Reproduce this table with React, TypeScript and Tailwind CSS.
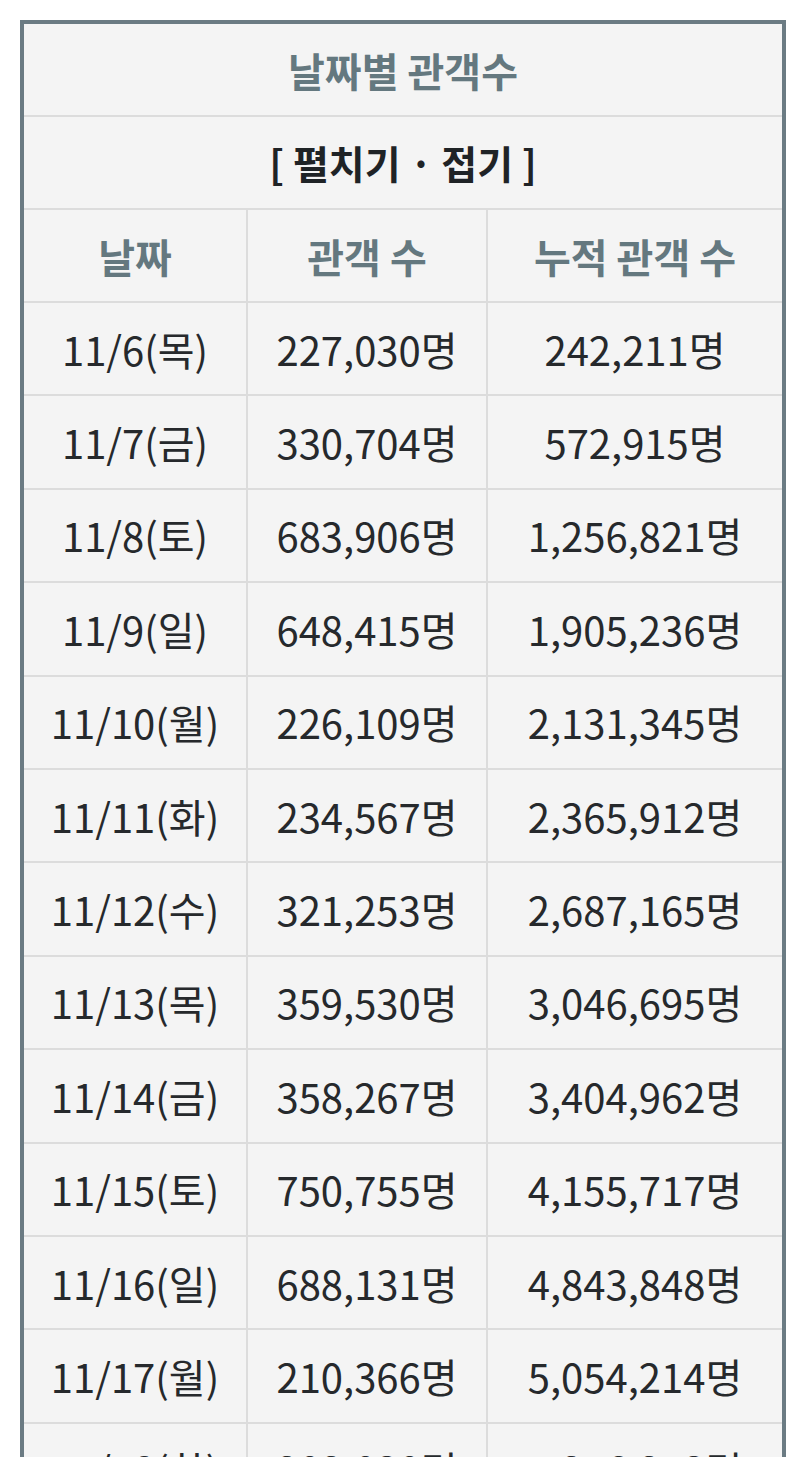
import React from "react";

const rows: [string, string, string][] = [
  ["11/6(목)", "227,030명", "242,211명"],
  ["11/7(금)", "330,704명", "572,915명"],
  ["11/8(토)", "683,906명", "1,256,821명"],
  ["11/9(일)", "648,415명", "1,905,236명"],
  ["11/10(월)", "226,109명", "2,131,345명"],
  ["11/11(화)", "234,567명", "2,365,912명"],
  ["11/12(수)", "321,253명", "2,687,165명"],
  ["11/13(목)", "359,530명", "3,046,695명"],
  ["11/14(금)", "358,267명", "3,404,962명"],
  ["11/15(토)", "750,755명", "4,155,717명"],
  ["11/16(일)", "688,131명", "4,843,848명"],
  ["11/17(월)", "210,366명", "5,054,214명"],
  ["11/18(화)", "202,030명", "5,256,243명"],
];

export default function App() {
  return (
    <div
      className="w-[796px] h-[1457px] overflow-hidden bg-white pt-[20px] pl-[20px]"
      style={{ fontFamily: '"Noto Sans CJK KR", "Noto Sans", sans-serif' }}
    >
      <div className="w-[766px] border-[4px] border-b-0 border-[#6b7b83] bg-[#f4f4f4]">
        <div className="h-[93px] flex items-center justify-center text-[40px] font-bold text-[#64787f] border-b-2 border-[#dcdcdc]">
          날짜별 관객수
        </div>
        <div className="h-[93px] flex items-center justify-center text-[39px] font-bold text-[#1f2326] border-b-2 border-[#dcdcdc]">
          [ 펼치기 · 접기 ]
        </div>
        <div className="grid grid-cols-[224px_240px_1fr] h-[93px] border-b-2 border-[#dcdcdc] text-[40px] font-bold text-[#64787f]">
          <div className="flex items-center justify-center border-r-2 border-[#dcdcdc]">날짜</div>
          <div className="flex items-center justify-center border-r-2 border-[#dcdcdc]">관객 수</div>
          <div className="flex items-center justify-center">누적 관객 수</div>
        </div>
        {rows.map((r, i) => (
          <div
            key={i}
            className="grid grid-cols-[224px_240px_1fr] h-[93.4px] border-b-2 border-[#dcdcdc] text-[40px] text-[#26292c]"
          >
            <div className="flex items-center justify-center border-r-2 border-[#dcdcdc]">{r[0]}</div>
            <div className="flex items-center justify-center border-r-2 border-[#dcdcdc]">{r[1]}</div>
            <div className="flex items-center justify-center">{r[2]}</div>
          </div>
        ))}
      </div>
    </div>
  );
}
